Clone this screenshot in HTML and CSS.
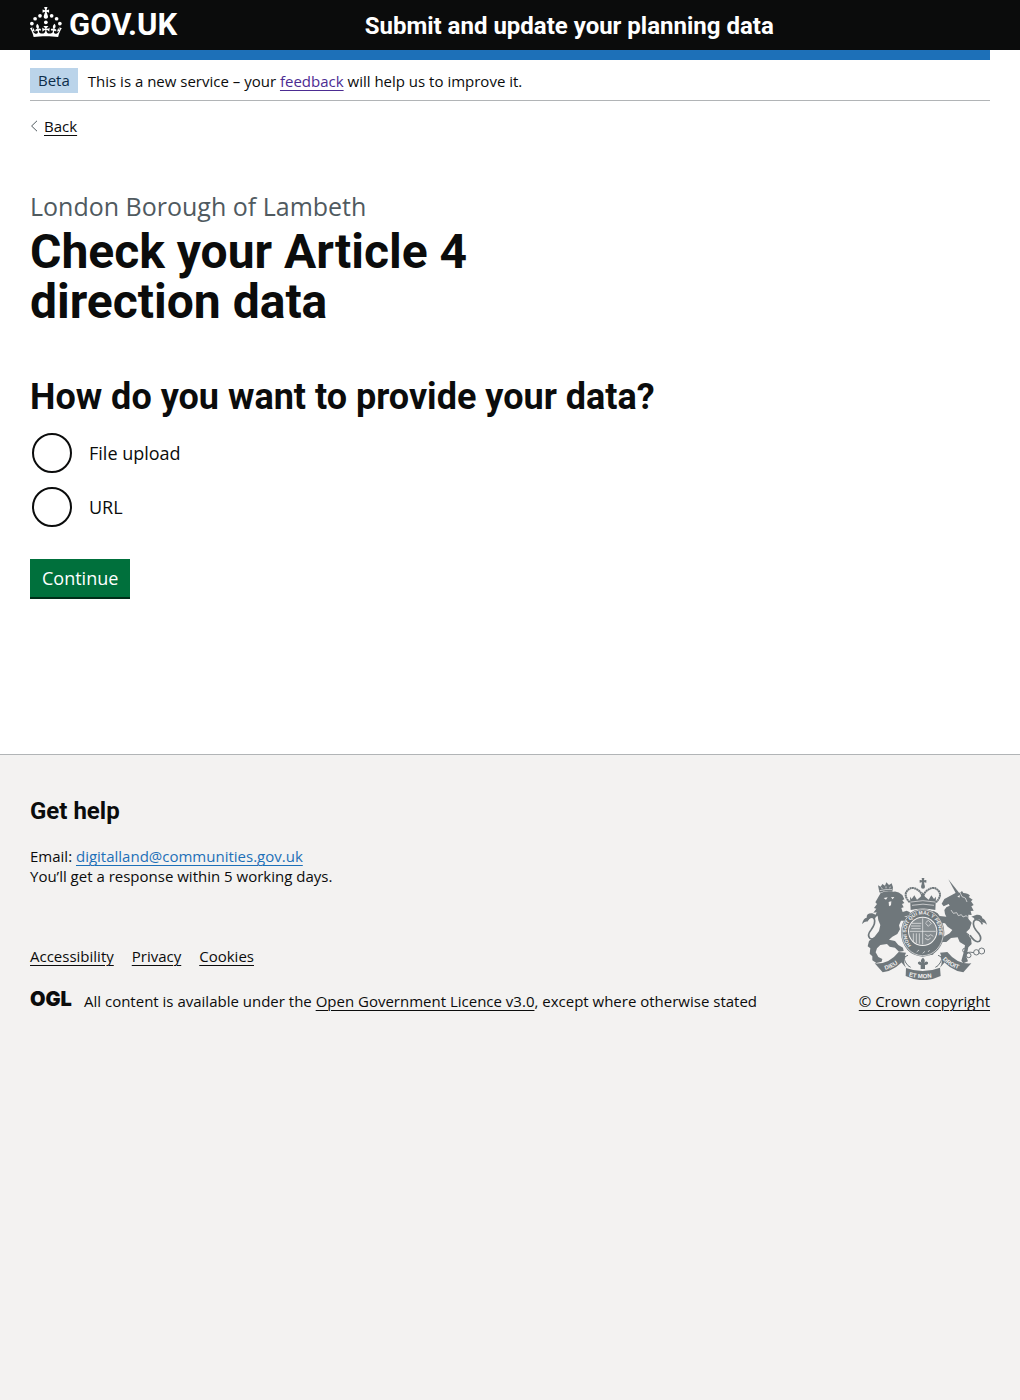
FILE: index.html
```html
<!DOCTYPE html>
<html lang="en">
<head>
  <meta charset="utf-8">
  <meta name="viewport" content="width=device-width, initial-scale=1">
  <title>Check your Article 4 direction data</title>
  <link rel="stylesheet" href="styles.css">
</head>
<body>
  <header class="header">
    <div class="container header-inner">
      <a class="brand" href="#" aria-label="GOV.UK">
        <svg class="brand-crown" viewBox="0 0 64 60" aria-hidden="true">
          <circle cx="20" cy="17.6" r="3.7"/><circle cx="10.2" cy="23.5" r="3.7"/><circle cx="3.7" cy="33.2" r="3.7"/><circle cx="31.7" cy="30.6" r="3.7"/><circle cx="43.3" cy="17.6" r="3.7"/><circle cx="53.2" cy="23.5" r="3.7"/><circle cx="59.7" cy="33.2" r="3.7"/>
          <path d="M33.1,9.8c.2-.1.3-.3.5-.5l4.6,2.4v-6.8l-4.6,1.5c-.1-.2-.3-.3-.5-.5l1.9-5.9h-6.7l1.9,5.9c-.2.1-.3.3-.5.5l-4.6-1.5v6.8l4.6-2.4c.1.2.3.3.5.5l-2.6,8c-.9,2.8,1.2,5.7,4.1,5.7h0c3,0,5.1-2.9,4.1-5.7l-2.6-8ZM37,37.9s-3.4,3.8-4.1,6.1c2.2,0,4.2-.5,6.4-2.8l-.7,8.5c-2-2.8-4.4-4.1-5.7-3.8.1,3.1.5,6.7,5.8,7.2,3.7.3,6.7-1.5,7-3.8.4-2.6-2-4.3-3.7-1.6-1.4-4.5,2.4-6.1,4.9-3.2-1.9-4.5-1.8-7.7,2.4-10.9,3,4,2.6,7.3-1.2,11.1,2.4-1.3,6.2,0,4,4.6-1.2-2.8-3.7-2.2-4.2.2-.3,1.7.7,3.7,3,4.2,1.9.3,4.7-.9,7-5.9-1.3,0-2.4.7-3.9,1.7l2.4-8c.6,2.3,1.4,3.7,2.2,4.5.6-1.6.5-2.8,0-5.3l5,1.8c-2.6,3.6-5.2,8.7-7.3,17.5-7.4-1.1-15.7-1.7-24.5-1.7h0c-8.8,0-17.1.6-24.5,1.7-2.1-8.9-4.7-13.9-7.3-17.5l5-1.8c-.5,2.5-.6,3.7,0,5.3.8-.8,1.6-2.3,2.2-4.5l2.4,8c-1.5-1-2.6-1.7-3.9-1.7,2.3,5,5.2,6.2,7,5.9,2.3-.4,3.3-2.4,3-4.2-.5-2.4-3-3.1-4.2-.2-2.2-4.6,1.6-6,4-4.6-3.7-3.7-4.2-7.1-1.2-11.1,4.2,3.2,4.3,6.4,2.4,10.9,2.5-2.8,6.3-1.3,4.9,3.2-1.8-2.7-4.1-1-3.7,1.6.3,2.3,3.3,4.1,7,3.8,5.4-.5,5.7-4.2,5.8-7.2-1.3-.2-3.7,1-5.7,3.8l-.7-8.5c2.2,2.3,4.2,2.7,6.4,2.8-.7-2.3-4.1-6.1-4.1-6.1h10.6Z"/>
        </svg>
        <span class="brand-name">GOV.UK</span>
      </a>
      <a class="service-name" href="#">Submit and update your planning data</a>
    </div>
  </header>

  <div class="container page">
    <div class="phase-banner">
      <strong class="tag">Beta</strong>
      <span>This is a new service – your <a class="link-visited" href="#">feedback</a> will help us to improve it.</span>
    </div>
    <a class="back-link" href="#">
      <svg class="back-arrow" viewBox="0 0 8 12" aria-hidden="true"><path d="M7 .8 1.6 6 7 11.2"/></svg>
      <span class="back-text">Back</span>
    </a>

    <main class="main">
      <div class="two-thirds">
        <span class="caption">London Borough of Lambeth</span>
        <h1 class="heading-xl">Check your Article 4 direction data</h1>
        <form>
          <fieldset class="fieldset">
            <legend class="legend">How do you want to provide your data?</legend>
            <div class="radios">
              <div class="radio-item">
                <input class="radio" type="radio" id="method-file" name="method" value="file">
                <label for="method-file">File upload</label>
              </div>
              <div class="radio-item">
                <input class="radio" type="radio" id="method-url" name="method" value="url">
                <label for="method-url">URL</label>
              </div>
            </div>
          </fieldset>
          <button class="button" type="submit">Continue</button>
        </form>
      </div>
    </main>
  </div>

  <footer class="footer">
    <div class="container footer-inner">
      <div class="footer-main">
        <h2 class="heading-m">Get help</h2>
        <p class="help">Email: <a class="link" href="mailto:digitalland@communities.gov.uk">digitalland@communities.gov.uk</a><br>You’ll get a response within 5 working days.</p>
        <ul class="footer-links">
          <li><a href="#">Accessibility</a></li>
          <li><a href="#">Privacy</a></li>
          <li><a href="#">Cookies</a></li>
        </ul>
        <div class="licence">
          <svg class="ogl" viewBox="0 0 41 17" role="img" aria-label="Open Government Licence"><text x="0" y="15">OGL</text></svg>
          <span>All content is available under the <a href="#">Open Government Licence v3.0</a>, except where otherwise stated</span>
        </div>
      </div>
      <a class="copyright" href="#">
        <svg class="arms" viewBox="36 24 375 306" aria-hidden="true">
          <defs>
            <path id="garter-path" d="M184 226A49 54 0 1 1 252 226"/>
            <path id="ribbon-left" d="M106 300Q138 292 164 262"/>
            <path id="ribbon-mid" d="M176 319Q218 331 270 317"/>
            <path id="ribbon-right" d="M278 268Q302 295 344 301"/>
          </defs>
          <!-- lion -->
          <path class="solid" d="M92 69q14-7 38-4 14-3 27 10l6 13-6 3 6 8-7 3 5 10-7 2 4 12 12-4 10 5-3 8-15 6 14 1 3 7-10 3-16 0-6 14 3 12-8 14-15 8-10 9 18 4 10 12 14 8 2 10-14 2-12-12-16-3-8-8-20 3-10 10-4 12 8 14 12 6-2 8-16 4-12-8 0-12-8-8 2-16-8-6 4-16 16-12 14-18 4-18-6-14-2-14-8 2 5-12-10 1 9-12-7-2 9-12-5-5z"/>
          <path class="solid" d="M88 66 84 46l8 4 5-8 8 5 4-10 8 8 8-5 4 12-2 13q-20-4-37 3z"/>
          <path class="cut-line" d="M89 62q18-5 37-3M94 52l3 5M108 49v6M121 50l-2 5"/>
          <path class="cut" d="m101 84 12-2-5 7zm15 12 8-2-1 12-6 3zm7-14 10-1-5 7z"/>
          <path class="tail" d="M86 194q-16 18-26 11-10-9 3-25 15-20 10-33-7-10-15-4l-8 10"/>
          <path class="solid" d="M36 162q4-18 14-19-1-14 17-13l18 8q-8-1-10 8-16-6-22 8-10 1-17 8z"/>
          <!-- unicorn -->
          <path class="solid" d="m295 28 31 39-7 6z"/>
          <path class="solid" d="M322 66l8 2 6-5 4 6q14 0 20 8l-4 4 12 8-5 5 8 11-7 4 7 13-9 1 3 12-10-1 0 12 10 12-6 18-10 10 6 10 8 10 2 16-10 10-6 28 5 14-14 6-6-8 8-28 3-18-16-10-6-14-20 2-14 12-12 0-8 12-12 10-8 16-12 2-6-10 8-10 12-4 6-18 12-10 12-4 18-10 8-10-14-10-8-10-14-2-4 12-10-8-10-22-8-4 0-8 12-5 12 7 6 8 20 2-4-8-2-12 6-8 10-5-3-5-15 7-6-8 8-14z"/>
          <path class="cut" d="m322 79 8-3-2 7z"/>
          <path class="cut-line" d="m303 120 7 10 10-2 5 9 9-3 5 7 10-4 4 5"/>
          <path class="cut-line" d="m330 67 6 13 10 4 5 12"/>
          <path class="ring" d="M301 119a6 6 0 1 0-8 9M352 190a7 7 0 1 1-9 9"/>
          <g class="ring"><circle cx="344" cy="241" r="6"/><circle cx="356" cy="256" r="7"/><circle cx="379" cy="247" r="8"/><circle cx="395" cy="243" r="9"/><path d="M350 248q10-3 22 0"/></g>
          <path class="tail" d="M360 196q16 24 28 18 9-8-2-24-20-21-15-35 5-10 16-4 8 4 10 12"/>
          <path class="solid" d="M411 164q-5-16-14-19-1-12-17-11l-16 6q8 1 11 9 14-6 20 8 9 0 16 7z"/>
          <!-- royal crown -->
          <path class="solid" d="M215 24h8l-1 7 7-1v8l-7-1 2 10h-10l2-10-7 1v-8l7 1z"/>
          <circle class="solid" cx="219" cy="50" r="6"/>
          <path class="arch" d="M179 97q-19-20-8-34 13-16 31-4 13 7 16 25 4-18 17-25 18-12 31 4 11 14-8 34"/>
          <path class="solid" d="m180 80 5 7 8-11 8 13 11-9 6-14 7 14 11 9 8-13 8 11 6-7-2 40q-38-9-74 0z"/>
          <path class="cut-line" d="M183 96q35-8 72 0M186 106q33-7 66 0"/>
          <!-- shield and garter -->
          <ellipse class="solid" cx="218" cy="188" rx="65" ry="72"/>
          <ellipse class="cut-ring" cx="218" cy="188" rx="62" ry="69"/>
          <circle class="cut" cx="218" cy="184" r="44"/>
          <circle class="shield" cx="218" cy="184" r="41"/>
          <path class="cut-line" d="M218 145v78M179 184h78M185 160h29M183 168h29M184 176h28M190 190v25M199 190v29M208 190v31"/>
          <path class="cut-line" d="m227 158 8-7 9 9-9 9-8-9m-1 33 8 6 8-5 8 5m-25 6 9 5 8-6"/>
          <path class="cut-line" d="m200 246 7-6m11 10 7-6m9 2 5-6"/>
          <text class="motto small"><textPath href="#garter-path">HONI SOIT QUI MAL Y PENSE</textPath></text>
          <!-- motto ribbon -->
          <path class="solid" d="M74 280Q116 284 146 246L168 259Q142 301 98 307ZM146 246l22 2q-12 22 0 45l-14-16z"/>
          <path class="solid" d="M364 280Q322 284 292 246L270 259Q296 301 340 307ZM292 246l-22 2q12 22 0 45l14-16z"/>
          <path class="solid" d="M168 294q51 19 102-1l2 25q-53 25-105 0z"/>
          <path class="outline" d="M174 256q-16 4-8 20 8 14 16 16M264 256q16 4 8 20-8 14-16 16"/>
          <path class="solid" d="M219 263q9 7 3 17 5-9 12-3 2 8-9 8v12h-13v-12q-10-1-8-8 7-6 11 3-6-10 4-17z"/>
          <text class="motto"><textPath href="#ribbon-left">DIEU</textPath></text>
          <text class="motto"><textPath href="#ribbon-mid">ET MON</textPath></text>
          <text class="motto"><textPath href="#ribbon-right">DROIT</textPath></text>
        </svg>
        <span class="copyright-text">© Crown copyright</span>
      </a>
    </div>
  </footer>
</body>
</html>
```
FILE: styles.css
```css
* {
  box-sizing: border-box;
}

html {
  background: #f3f2f1;
}

body {
  display: flex;
  flex-direction: column;
  min-height: 100vh;
  margin: 0;
  background: #fff;
  color: #0b0c0c;
  font-family: "Open Sans", "Liberation Sans", sans-serif;
  font-size: 15px;
  line-height: 20px;
}

a {
  color: inherit;
  text-decoration-thickness: 1px;
  text-underline-offset: 3px;
}

.container {
  width: calc(100% - 60px);
  max-width: 960px;
  margin: 0 auto;
}

/* Header */
.header {
  background: #0b0c0c;
  color: #fff;
}

.header-inner {
  display: grid;
  grid-template-columns: 1fr 2fr;
  gap: 22px;
  align-items: center;
  height: 50px;
}

.header a {
  text-decoration: none;
}

.brand {
  display: flex;
  align-items: center;
  gap: 7px;
  padding-bottom: 6px;
}

.brand-crown {
  width: 32px;
  height: 30px;
  fill: #fff;
}

.brand-name,
.service-name,
.heading-xl,
.heading-m,
.legend {
  font-family: Roboto, "Liberation Sans", sans-serif;
  font-weight: 700;
}

.brand-name {
  padding-top: 5px;
  font-size: 31px;
  line-height: 25px;
}

.service-name {
  padding-top: 2px;
  font-size: 24px;
  line-height: 30px;
}

.page {
  border-top: 10px solid #1d70b8;
}

/* Phase banner */
.phase-banner {
  display: flex;
  align-items: center;
  gap: 10px;
  padding: 8px 0 7px;
  border-bottom: 1px solid #b1b4b6;
}

.tag {
  padding: 2px 8px 3px;
  background: #bbd4ea;
  color: #0c2d4a;
  font-weight: 400;
}

.link-visited {
  color: #4c2c92;
}

.link {
  color: #1d70b8;
}

.back-link {
  display: inline-flex;
  align-items: center;
  gap: 6px;
  margin-top: 15px;
  text-decoration: none;
}

.back-arrow {
  width: 8px;
  height: 12px;
  fill: none;
  stroke: #505a5f;
}

.back-text,
.copyright-text {
  text-decoration: underline;
  text-decoration-thickness: 1px;
  text-underline-offset: 3px;
}

/* Main */
.main {
  padding: 53px 0 155px;
}

.two-thirds {
  max-width: 630px;
}

.caption {
  display: block;
  margin-bottom: 3px;
  color: #505a5f;
  font-size: 25px;
  line-height: 35px;
}

.heading-xl {
  margin: 0 0 50px;
  font-size: 48px;
  line-height: 50px;
}

.fieldset {
  min-width: 0;
  margin: 0 0 32px;
  padding: 0;
  border: 0;
}

.legend {
  margin-bottom: 16px;
  padding: 0;
  font-size: 36px;
  line-height: 40px;
}

.radios {
  display: grid;
  gap: 14px;
}

.radio-item {
  display: flex;
  align-items: center;
  gap: 17px;
  padding-left: 2px;
  font-size: 18px;
  line-height: 25px;
}

.radio {
  width: 40px;
  height: 40px;
  margin: 0;
  appearance: none;
  border: 2px solid #0b0c0c;
  border-radius: 50%;
  background: #fff;
}

.radio:checked {
  box-shadow: inset 0 0 0 8px #fff;
  background: #0b0c0c;
}

.button {
  display: block;
  padding: 9px 12px;
  border: 0;
  border-bottom: 2px solid #002d18;
  background: #00703c;
  color: #fff;
  font: inherit;
  font-size: 18px;
  line-height: 20px;
}

/* Footer */
.footer {
  flex: 1;
  border-top: 1px solid #b1b4b6;
  background: #f3f2f1;
}

.footer-inner {
  display: flex;
  align-items: flex-end;
  justify-content: space-between;
  padding: 41px 0 25px;
}

.heading-m {
  margin: 0 0 20px;
  font-size: 24px;
  line-height: 30px;
}

.help {
  margin: 0 0 60px;
}

.footer-links {
  display: flex;
  gap: 18px;
  margin: 0 0 25px;
  padding: 0;
  list-style: none;
}

.licence {
  display: flex;
  gap: 13px;
}

.ogl {
  width: 41px;
  height: 17px;
  overflow: visible;
}

.ogl text {
  font-family: Inter, sans-serif;
  font-size: 20px;
  font-weight: 900;
  fill: #0b0c0c;
}

.copyright {
  display: flex;
  flex-direction: column;
  align-items: center;
  gap: 11px;
  text-decoration: none;
}

.arms {
  width: 125px;
  height: 102px;
}

.solid {
  fill: #6f777b;
}

.cut {
  fill: #f3f2f1;
}

.cut-line,
.cut-ring,
.ring,
.outline,
.tail,
.arch {
  fill: none;
  stroke: #f3f2f1;
  stroke-width: 2;
}

.ring,
.outline {
  stroke: #6f777b;
  stroke-width: 3;
}

.tail {
  stroke: #6f777b;
  stroke-width: 5;
}

.arch {
  stroke: #6f777b;
  stroke-width: 6;
  stroke-dasharray: 6 1;
}

.shield {
  fill: #858c90;
}

.motto {
  fill: #f3f2f1;
  font-family: "Liberation Sans", sans-serif;
  font-size: 18px;
  font-weight: 700;
}

.small {
  font-size: 15px;
}
```
